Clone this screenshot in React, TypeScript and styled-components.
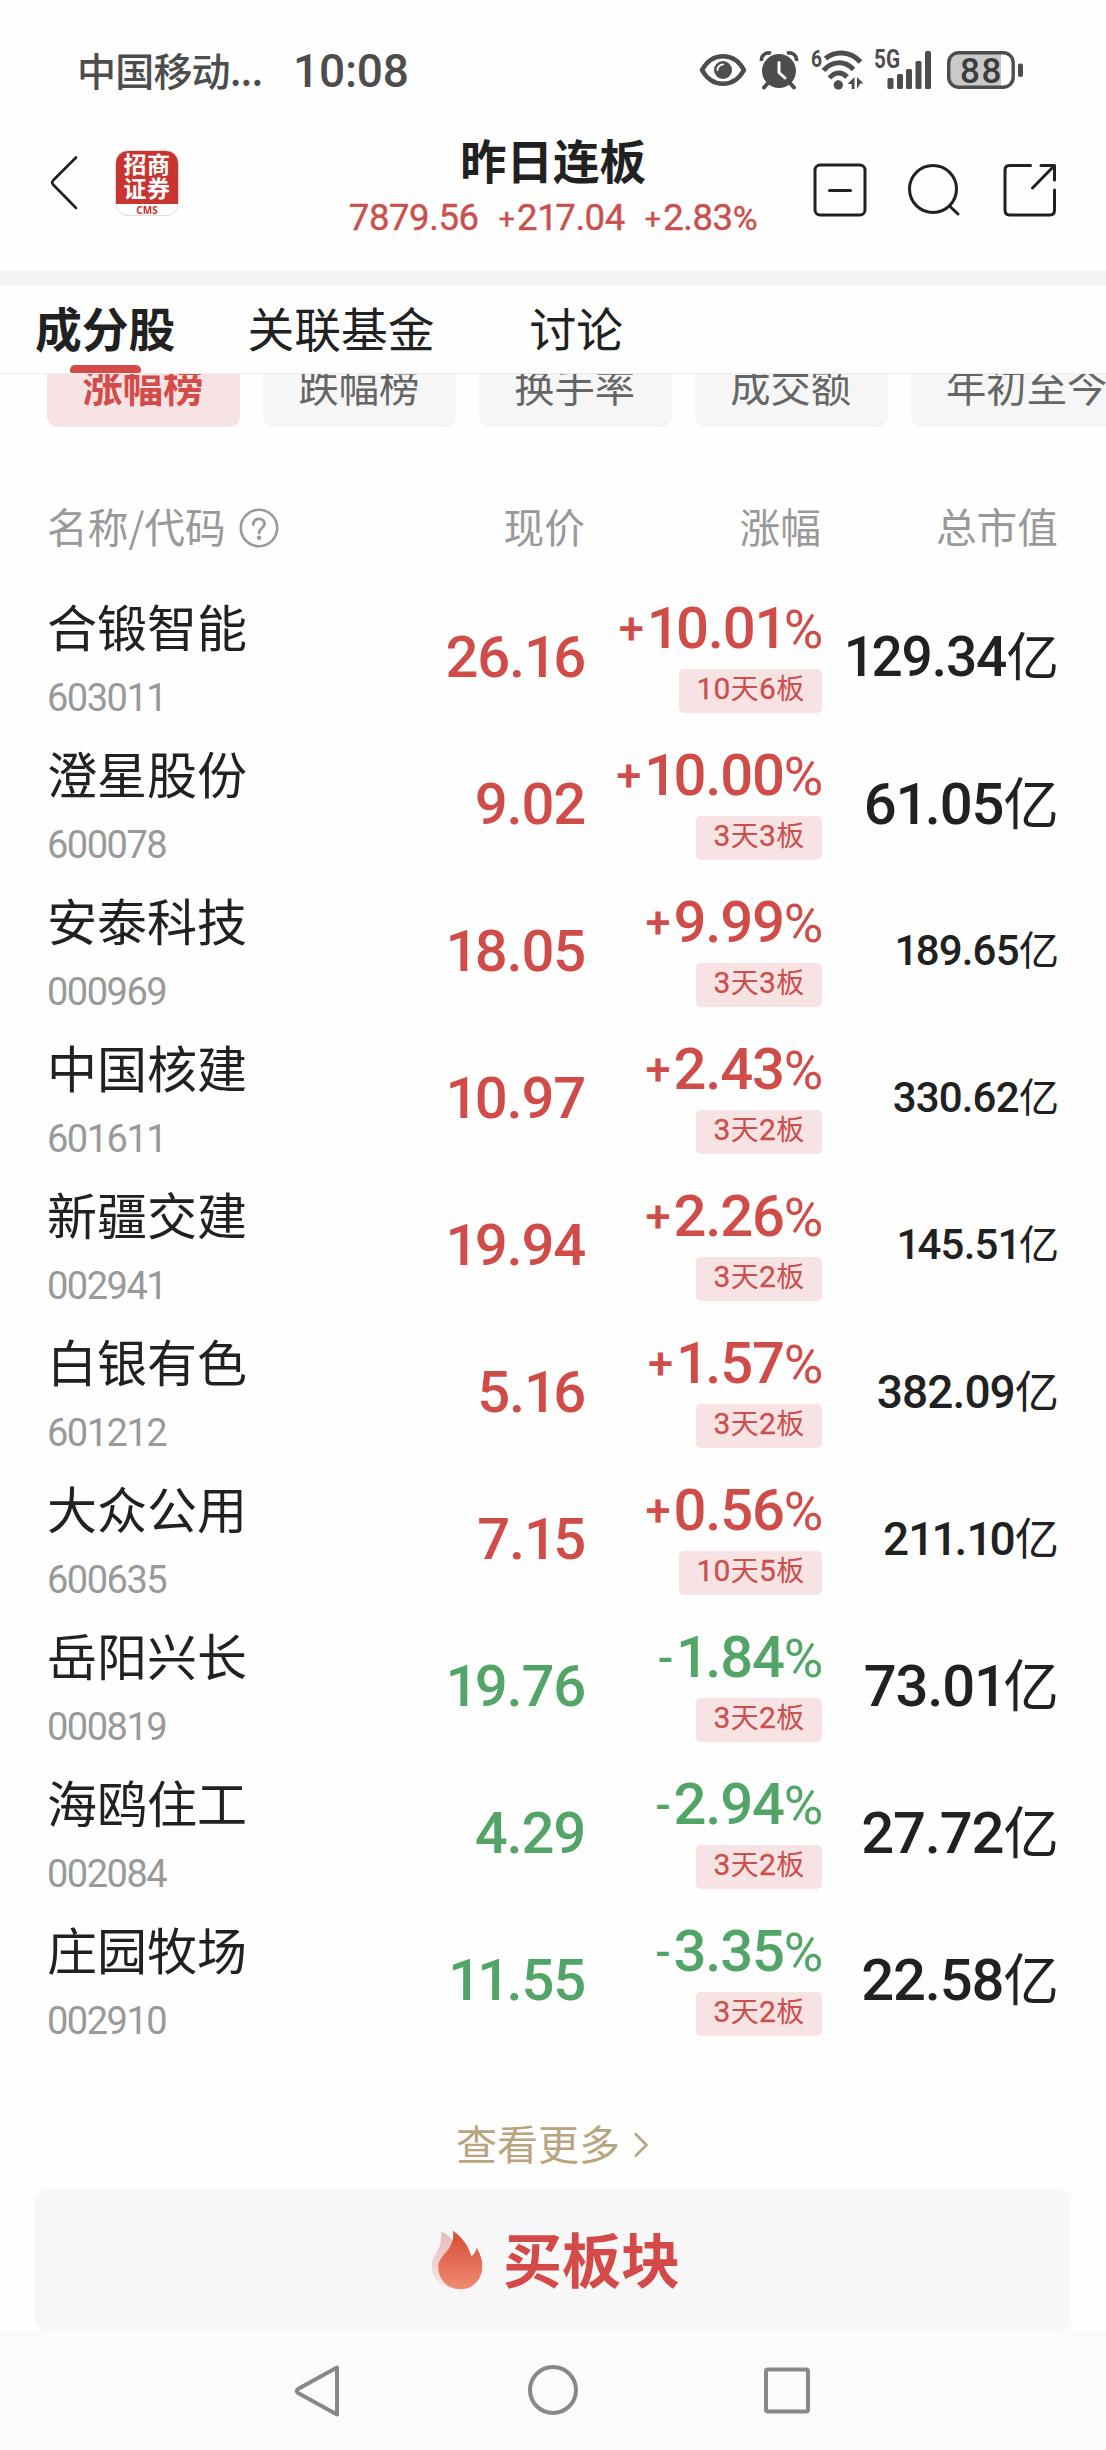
import React from "react";
import styled, { createGlobalStyle } from "styled-components";

const CJK = `"Noto Sans CJK SC", "Noto Sans", sans-serif`;
const NUM = `Roboto, "Noto Sans CJK SC", sans-serif`;
const INK = "#212121";
const RED = "#d04c49";
const GREEN = "#52a467";
const GREY = "#999999";
const STATUS = "#4d4d4d";

const Global = createGlobalStyle`
  * { box-sizing: border-box; }
  html, body { margin: 0; padding: 0; background: #fefefe; }
  body { font-family: ${CJK}; color: ${INK}; }
  svg { display: block; flex: none; overflow: visible; }
`;

const Screen = styled.main`
  width: 1106px;
  height: 2450px;
  display: flex;
  flex-direction: column;
  overflow: hidden;
  background: #fefefe;
`;

/* ---------- status bar ---------- */

const StatusBar = styled.div`
  height: 140px;
  flex: none;
  display: flex;
  align-items: center;
  padding: 0 82px 0 77px;
  color: ${STATUS};
`;

const Carrier = styled.span`
  width: 216px;
  margin-top: -2px;
  font-size: 39px;
  font-weight: 500;
  line-height: 56px;
  letter-spacing: -0.8px;
  white-space: nowrap;
`;

const Clock = styled.span`
  flex: 1;
  padding-top: 1px;
  font: 500 46px/60px ${NUM};
  letter-spacing: -0.2px;
`;

const StatusIcons = styled.div`
  display: flex;
  align-items: center;
`;

const IconSlot = styled.span<{ $gap: number }>`
  margin-left: ${(p) => p.$gap}px;
`;

/* ---------- header ---------- */

const Header = styled.header`
  height: 131px;
  flex: none;
  display: grid;
  grid-template-columns: 1fr auto 1fr;
  align-items: start;
  padding: 0 49px;
`;

const HeaderLeft = styled.div`
  display: flex;
  align-items: center;
  gap: 36px;
  padding-top: 10px;
`;

const HeaderRight = styled.div`
  display: flex;
  justify-content: flex-end;
  gap: 40px;
  padding-top: 22px;
`;

const Logo = styled.div`
  width: 64px;
  height: 66px;
  border-radius: 13px;
  border: 1px solid #e3d9d8;
  background: linear-gradient(#c8352e 0 53px, #ffffff 53px);
  display: flex;
  flex-direction: column;
  align-items: center;
`;

const LogoLine = styled.span`
  font-size: 23px;
  font-weight: 700;
  line-height: 24px;
  letter-spacing: 0.5px;
  color: #ffffff;
`;

const LogoMark = styled.span`
  margin-top: 6px;
  font: 700 10px/10px "Noto Sans", sans-serif;
  color: #c8352e;
`;

const TitleBlock = styled.div`
  display: flex;
  flex-direction: column;
  align-items: center;
`;

const Title = styled.h1`
  margin: -10px 0 0;
  font-size: 46.5px;
  font-weight: 700;
  line-height: 57px;
`;

const Quote = styled.div`
  display: flex;
  gap: 20px;
  color: #c9504d;
  font: 400 36.5px/50px ${NUM};
  -webkit-text-stroke: 0.4px #c9504d;
  letter-spacing: -0.4px;
  margin-top: 6px;
`;

/* ---------- tabs and chips ---------- */

const Band = styled.div`
  height: 14px;
  flex: none;
  background: #f2f3f5;
`;

const Tabs = styled.nav`
  height: 89px;
  flex: none;
  display: flex;
  padding: 0 35px;
  border-bottom: 1px solid #ededed;
`;

const Tab = styled.div<{ $active?: boolean; $gap?: number }>`
  display: flex;
  flex-direction: column;
  align-items: center;
  margin-left: ${(p) => p.$gap ?? 0}px;
  font-size: 46.8px;
  font-weight: ${(p) => (p.$active ? 700 : 400)};
  line-height: 80px;
  padding-top: 2px;
  height: 88px;
`;

const TabBar = styled.i`
  width: 71px;
  height: 8px;
  margin-top: -2px;
  border-radius: 5px 5px 2px 2px;
  background: #d64a48;
`;

const Chips = styled.div`
  height: 53px;
  flex: none;
  display: flex;
  align-items: flex-end;
  gap: 23px;
  padding-left: 47px;
  overflow: hidden;
`;

const Chip = styled.span<{ $active?: boolean }>`
  flex: none;
  height: 84px;
  padding: 0 36.5px 0 35.5px;
  border-radius: 11px;
  font-size: 40.3px;
  line-height: 83px;
  font-weight: ${(p) => (p.$active ? 700 : 400)};
  color: ${(p) => (p.$active ? "#d44c49" : "#666666")};
  background: ${(p) => (p.$active ? "#f7e3e3" : "#f6f6f6")};
`;

/* ---------- table ---------- */

const Table = styled.section`
  flex: none;
  padding-top: 72px;
`;

const Row = styled.div`
  display: grid;
  grid-template-columns: 300px 239px 236px 237px;
  padding-left: 47px;
  height: 147px;
  align-items: center;
`;

const HeadRow = styled(Row)`
  height: 84px;
  align-items: start;
  font-size: 40.7px;
  line-height: 54px;
  color: ${GREY};
`;

const HeadCell = styled.span`
  text-align: right;
  padding-right: 1px;
`;

const HeadName = styled.span`
  display: flex;
  align-items: center;
  gap: 13px;
  white-space: nowrap;

  svg {
    margin-top: 3px;
  }
`;

const NameCell = styled.div`
  display: flex;
  flex-direction: column;
  padding-top: 8px;
`;

const StockName = styled.span`
  font-size: 50px;
  line-height: 64px;
`;

const StockCode = styled.span`
  margin-top: 11px;
  font: 400 38px/60px ${NUM};
  letter-spacing: -1.5px;
  color: ${GREY};
`;

const Price = styled.span<{ $down: boolean }>`
  text-align: right;
  padding-right: 1px;
  font: 500 58px/70px ${NUM};
  letter-spacing: -1.2px;
  color: ${(p) => (p.$down ? GREEN : RED)};
`;

const ChangeCell = styled.div`
  display: flex;
  flex-direction: column;
  align-items: flex-end;
  padding-bottom: 8px;
`;

const Change = styled.span<{ $down: boolean }>`
  font: 500 58px/70px ${NUM};
  letter-spacing: -1.2px;
  white-space: nowrap;
  color: ${(p) => (p.$down ? GREEN : RED)};
`;

const One = styled.span`
  letter-spacing: -0.065em;
`;

const Sign = styled.span`
  margin-right: 0.09em;
  font-size: 0.78em;
  line-height: 0;
  vertical-align: 0.075em;
`;

const Percent = styled.span`
  font-size: 0.93em;
  font-weight: 400;
  line-height: 0;
`;

const Tag = styled.span`
  height: 44px;
  margin-top: 6px;
  padding: 0 17.5px;
  border-radius: 5px;
  background: #f7e3e3;
  color: #c9504d;
  font: 400 30px/39px ${NUM};
  -webkit-text-stroke: 0.3px #c9504d;
  letter-spacing: 0.3px;
`;

const TagHan = styled.span`
  font-family: ${CJK};
  font-size: 28px;
  line-height: 0;
  -webkit-text-stroke: 0;
`;

const Cap = styled.span<{ $size: number }>`
  text-align: right;
  font: 500 ${(p) => p.$size}px/70px ${NUM};
  letter-spacing: -0.02em;
  white-space: nowrap;
`;

const CapUnit = styled.span`
  font-family: ${CJK};
  font-size: 0.96em;
  font-weight: 400;
  line-height: 0;
  letter-spacing: 0;
`;

/* ---------- bottom ---------- */

const More = styled.div`
  height: 136px;
  flex: none;
  display: flex;
  justify-content: center;
  align-items: center;
  gap: 12px;
  padding-top: 44px;
  font-size: 41px;
  line-height: 60px;
  color: #b9a47f;

  svg {
    margin-top: 3px;
  }
`;

const MoreText = styled.span`
  margin-top: -3px;
`;

const BuyButton = styled.div`
  height: 142px;
  flex: none;
  margin: 0 35px;
  padding-left: 5px;
  border-radius: 13px;
  background: #f7f7f7;
  display: flex;
  align-items: center;
  justify-content: center;
  gap: 19px;
  color: #d44a48;
  font-size: 59px;
  font-weight: 700;
  line-height: 80px;
`;

const BuyText = styled.span`
  margin-top: -5px;
`;

const NavBar = styled.footer`
  flex: 1;
  background: #fbfbfb;
  display: flex;
  justify-content: center;
  gap: 182px;
  padding-top: 32px;
`;

/* ---------- icons ---------- */

const EyeIcon = () => (
  <svg width="48" height="34" viewBox="0 0 48 34">
    <path d="M3 17C8 8 15 3.2 24 3.2S40 8 45 17C40 26 33 30.8 24 30.8S8 26 3 17Z" fill="none" stroke={STATUS} strokeWidth="4.6" strokeLinejoin="round" />
    <circle cx="24" cy="17" r="9" fill={STATUS} />
    <path d="M18.5 17a5.5 5.5 0 0 1 5.5-5.5" fill="none" stroke="#fefefe" strokeWidth="2" strokeLinecap="round" />
  </svg>
);

const AlarmIcon = () => (
  <svg width="38" height="38" viewBox="0 0 38 38">
    <circle cx="19" cy="20" r="17" fill={STATUS} />
    <path d="M1.5 10C1 4 6 .8 11 2.2M36.5 10C37 4 32 .8 27 2.2" fill="none" stroke={STATUS} strokeWidth="3.6" />
    <path d="M8 32l-4 4.500M30 32l4 4.500" stroke={STATUS} strokeWidth="4" strokeLinecap="round" />
    <path d="M19 11.500v10l6 5.500" fill="none" stroke="#fefefe" strokeWidth="3" strokeLinecap="round" strokeLinejoin="round" />
  </svg>
);

const WifiIcon = () => (
  <svg width="54" height="42" viewBox="0 0 54 42">
    <text x="0" y="18" fontFamily="Roboto, sans-serif" fontWeight="700" fontSize="23" textLength="11" lengthAdjust="spacingAndGlyphs" fill={STATUS}>6</text>
    <g fill="none" stroke={STATUS} strokeWidth="5">
      <path d="M14.500 9.500C24 1.700 39 1.700 49.500 13" />
      <path d="M12.500 21.500C21 11.500 34 11.500 42.500 20.500" />
      <path d="M18.500 29C24 22.500 31 22.500 36 28" />
    </g>
    <circle cx="27.300" cy="36" r="4.700" fill={STATUS} />
    <path d="M43.500 28v12h-2.800v-5h-4.200zM46 28l6.500 6.500h-3.300l-3.200 5.500z" fill={STATUS} />
  </svg>
);

const SignalIcon = () => (
  <svg width="58" height="42" viewBox="0 0 58 42">
    <text x="0" y="19" fontFamily="Roboto, sans-serif" fontWeight="700" fontSize="25" textLength="26" lengthAdjust="spacingAndGlyphs" fill={STATUS}>5G</text>
    <g fill={STATUS}>
      <rect x="13.500" y="29" width="6" height="11" rx="1.500" />
      <rect x="23" y="25" width="6" height="15" rx="1.500" />
      <rect x="32" y="20" width="6" height="20" rx="1.500" />
      <rect x="41.500" y="12" width="6" height="28" rx="1.500" />
      <rect x="51" y="2" width="6" height="38" rx="1.500" />
    </g>
  </svg>
);

const BatteryIcon = () => (
  <svg width="77" height="38" viewBox="0 0 77 38">
    <path d="M11 2H54V36H11A9.500 9.500 0 0 1 2 26.500V11.500A9.500 9.500 0 0 1 11 2Z" fill="#c9c9c9" />
    <rect x="1.700" y="1.700" width="64.500" height="34.600" rx="10" fill="none" stroke={STATUS} strokeWidth="3.400" />
    <rect x="71" y="12.500" width="5" height="13.500" rx="2" fill={STATUS} />
    <text x="13" y="31.500" fontFamily="Roboto, sans-serif" fontWeight="500" fontSize="35" letterSpacing="1.500" fill="#3c3c3c">88</text>
  </svg>
);

const BackIcon = () => (
  <svg width="30" height="56" viewBox="0 0 30 56">
    <path d="M27 2.500L4 25.500Q2.300 27.500 4 29.500L27 53" fill="none" stroke={INK} strokeWidth="2.600" strokeLinecap="round" />
  </svg>
);

const MinusIcon = () => (
  <svg width="54" height="54" viewBox="0 0 54 54" fill="none" stroke={INK} strokeWidth="3" strokeLinecap="round">
    <rect x="2" y="3" width="50" height="50" rx="5" />
    <path d="M16.500 28.500h21" />
  </svg>
);

const SearchIcon = () => (
  <svg width="56" height="56" viewBox="0 0 56 56" fill="none" stroke={INK} strokeWidth="3" strokeLinecap="round">
    <circle cx="26" cy="27" r="23.500" />
    <path d="M42.500 44l8.500 8" />
  </svg>
);

const ShareIcon = () => (
  <svg width="54" height="54" viewBox="0 0 54 54" fill="none" stroke={INK} strokeWidth="3" strokeLinecap="round" strokeLinejoin="round">
    <path d="M27.500 3.500H6.500Q2 3.500 2 8V48Q2 53 6.500 53H47Q51.500 53 51.500 48V28" />
    <path d="M38 3.500H51.500V18M51 4L29.500 26" />
  </svg>
);

const HelpIcon = () => (
  <svg width="40" height="40" viewBox="0 0 40 40">
    <circle cx="20" cy="20" r="18.200" fill="none" stroke={GREY} strokeWidth="2.600" />
    <path d="M14.300 16.500C14.300 9 25.500 9 25.500 15.800C25.500 20 20 20.200 20 25" fill="none" stroke={GREY} strokeWidth="2.800" strokeLinecap="round" />
    <circle cx="20" cy="29.800" r="2.200" fill={GREY} />
  </svg>
);

const MoreIcon = () => (
  <svg width="18" height="26" viewBox="0 0 18 26">
    <path d="M3 1.500L14.500 13L3 24.500" fill="none" stroke="#b9a47f" strokeWidth="2.600" />
  </svg>
);

const flame = "M160 91C190 112 208 140 215 168C224 162 229 152 231 142C240 158 248 175 248 198C248 238 220 267 182 267C144 267 116 238 116 201C116 160 168 150 160 91Z";

const FlameIcon = () => (
  <svg width="53" height="60" viewBox="94 89 159 180">
    <defs>
      <linearGradient id="flameBody" x1="0" y1="0" x2="0" y2="1">
        <stop offset="0" stopColor="#d74a34" />
        <stop offset="1" stopColor="#f08c72" />
      </linearGradient>
      <linearGradient id="flameShade" x1="0" y1="0" x2="0" y2="1">
        <stop offset="0" stopColor="#e8b9bd" />
        <stop offset="1" stopColor="#f8e6e6" />
      </linearGradient>
    </defs>
    <path d="M124 94C150 102 170 130 180 160L150 262C118 256 96 230 96 198C96 160 130 150 124 94Z" fill="url(#flameShade)" />
    <path d={flame} fill="url(#flameBody)" />
  </svg>
);

const NavBack = () => (
  <svg width="50" height="56" viewBox="0 0 50 56">
    <path d="M43 4.500V51.500L4 30Q1.500 28 4 26Z" fill="none" stroke="#888888" strokeWidth="4" strokeLinejoin="round" />
  </svg>
);

const NavHome = () => (
  <svg width="54" height="54" viewBox="0 0 54 54">
    <circle cx="27" cy="27" r="23" fill="none" stroke="#888888" strokeWidth="4" />
  </svg>
);

const NavRecent = () => (
  <svg width="50" height="54" viewBox="0 0 50 54">
    <rect x="4" y="6.500" width="42" height="42" rx="2" fill="none" stroke="#888888" strokeWidth="4" />
  </svg>
);

/* ---------- data ---------- */

type Stock = { name: string; code: string; price: string; change: string; tag: string; cap: string; size: number };

const stocks: Stock[] = [
  { name: "合锻智能", code: "603011", price: "26.16", change: "+10.01", tag: "10天6板", cap: "129.34", size: 55 },
  { name: "澄星股份", code: "600078", price: "9.02", change: "+10.00", tag: "3天3板", cap: "61.05", size: 58 },
  { name: "安泰科技", code: "000969", price: "18.05", change: "+9.99", tag: "3天3板", cap: "189.65", size: 42 },
  { name: "中国核建", code: "601611", price: "10.97", change: "+2.43", tag: "3天2板", cap: "330.62", size: 42 },
  { name: "新疆交建", code: "002941", price: "19.94", change: "+2.26", tag: "3天2板", cap: "145.51", size: 42 },
  { name: "白银有色", code: "601212", price: "5.16", change: "+1.57", tag: "3天2板", cap: "382.09", size: 46 },
  { name: "大众公用", code: "600635", price: "7.15", change: "+0.56", tag: "10天5板", cap: "211.10", size: 46 },
  { name: "岳阳兴长", code: "000819", price: "19.76", change: "-1.84", tag: "3天2板", cap: "73.01", size: 58 },
  { name: "海鸥住工", code: "002084", price: "4.29", change: "-2.94", tag: "3天2板", cap: "27.72", size: 58 },
  { name: "庄园牧场", code: "002910", price: "11.55", change: "-3.35", tag: "3天2板", cap: "22.58", size: 58 },
];

const chips = ["涨幅榜", "跌幅榜", "换手率", "成交额", "年初至今"];

/* Figures with a tighter advance after each "1". */
const Digits = ({ value }: { value: string }) => (
  <>{value.split(/(1)/).map((part, i) => (part === "1" ? <One key={i}>1</One> : part))}</>
);

const Signed = ({ value }: { value: string }) => (
  <>
    <Sign>{value[0]}</Sign>
    <Digits value={value.slice(1)} />
  </>
);

const TagLabel = ({ text }: { text: string }) => (
  <Tag>
    {text.split(/([天板])/).map((part, i) => (/[天板]/.test(part) ? <TagHan key={i}>{part}</TagHan> : part))}
  </Tag>
);

const StockRow = ({ stock }: { stock: Stock }) => {
  const down = stock.change.startsWith("-");
  return (
    <Row>
      <NameCell>
        <StockName>{stock.name}</StockName>
        <StockCode>{stock.code}</StockCode>
      </NameCell>
      <Price $down={down}><Digits value={stock.price} /></Price>
      <ChangeCell>
        <Change $down={down}>
          <Signed value={stock.change} />
          <Percent>%</Percent>
        </Change>
        <TagLabel text={stock.tag} />
      </ChangeCell>
      <Cap $size={stock.size}>
        <Digits value={stock.cap} />
        <CapUnit>亿</CapUnit>
      </Cap>
    </Row>
  );
};

export default function App() {
  return (
    <Screen>
      <Global />
      <StatusBar>
        <Carrier>中国移动...</Carrier>
        <Clock>10:08</Clock>
        <StatusIcons>
          <EyeIcon />
          <IconSlot $gap={13}><AlarmIcon /></IconSlot>
          <IconSlot $gap={13}><WifiIcon /></IconSlot>
          <IconSlot $gap={9}><SignalIcon /></IconSlot>
          <IconSlot $gap={15}><BatteryIcon /></IconSlot>
        </StatusIcons>
      </StatusBar>
      <Header>
        <HeaderLeft>
          <BackIcon />
          <Logo>
            <LogoLine>招商</LogoLine>
            <LogoLine>证券</LogoLine>
            <LogoMark>CMS</LogoMark>
          </Logo>
        </HeaderLeft>
        <TitleBlock>
          <Title>昨日连板</Title>
          <Quote>
            <span>7879.56</span>
            <span><Signed value="+217.04" /></span>
            <span><Signed value="+2.83" /><Percent>%</Percent></span>
          </Quote>
        </TitleBlock>
        <HeaderRight>
          <MinusIcon />
          <SearchIcon />
          <ShareIcon />
        </HeaderRight>
      </Header>
      <Band />
      <Tabs>
        <Tab $active>成分股<TabBar /></Tab>
        <Tab $gap={72}>关联基金</Tab>
        <Tab $gap={95}>讨论</Tab>
      </Tabs>
      <Chips>
        {chips.map((label, i) => (
          <Chip key={label} $active={i === 0}>{label}</Chip>
        ))}
      </Chips>
      <Table>
        <HeadRow>
          <HeadName>名称/代码<HelpIcon /></HeadName>
          <HeadCell>现价</HeadCell>
          <HeadCell>涨幅</HeadCell>
          <HeadCell>总市值</HeadCell>
        </HeadRow>
        {stocks.map((stock) => (
          <StockRow key={stock.code} stock={stock} />
        ))}
      </Table>
      <More><MoreText>查看更多</MoreText><MoreIcon /></More>
      <BuyButton>
        <FlameIcon />
        <BuyText>买板块</BuyText>
      </BuyButton>
      <NavBar>
        <NavBack />
        <NavHome />
        <NavRecent />
      </NavBar>
    </Screen>
  );
}
